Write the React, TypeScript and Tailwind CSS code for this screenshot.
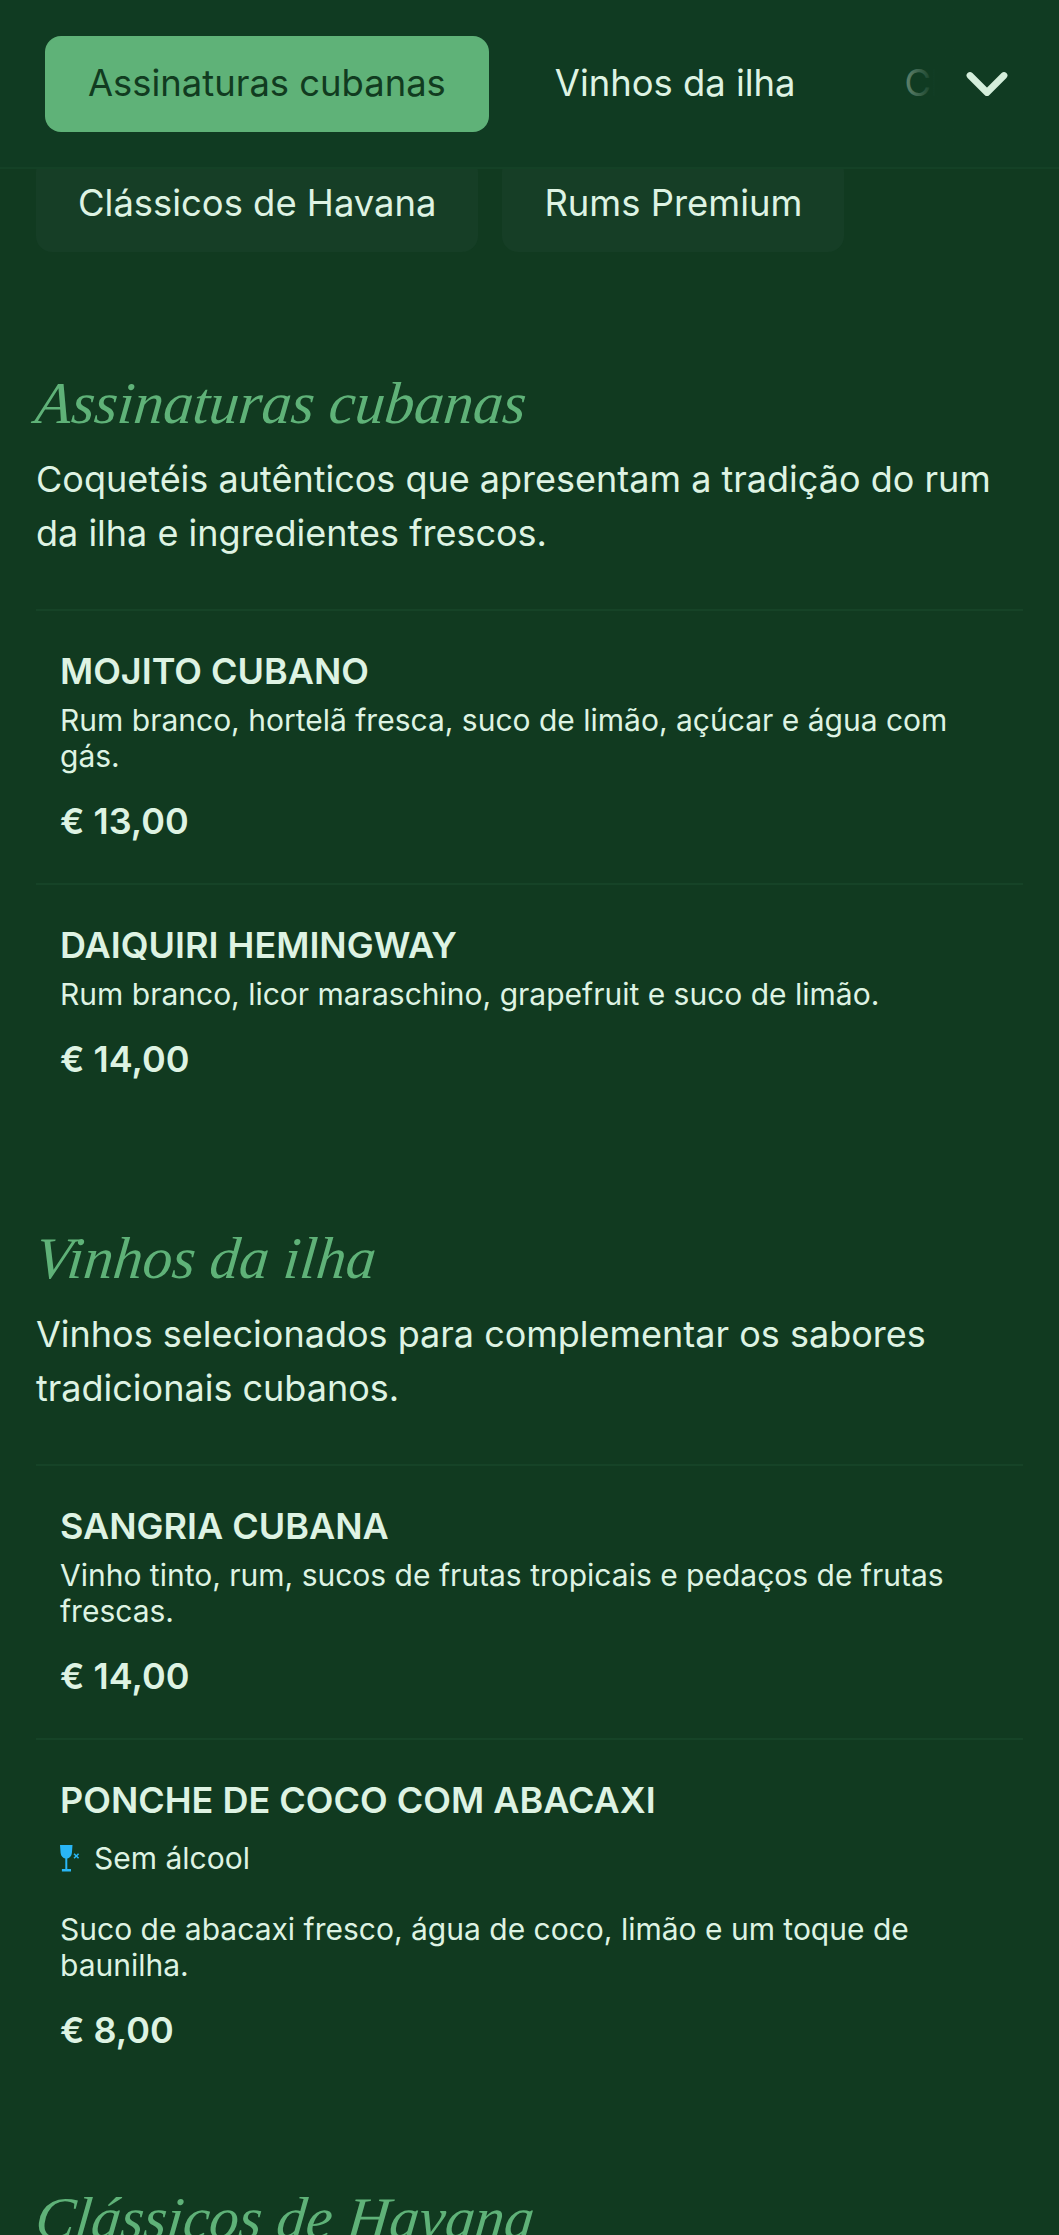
import { ChevronDown } from "lucide-react";

type Item = { name: string; desc: string[]; price: string; noAlcohol?: boolean };
type Section = { title: string; intro: string[]; items: Item[]; gap: string };

const sections: Section[] = [
  {
    title: "Assinaturas cubanas",
    intro: ["Coquetéis autênticos que apresentam a tradição do rum", "da ilha e ingredientes frescos."],
    gap: "mb-[97px]",
    items: [
      { name: "MOJITO CUBANO", desc: ["Rum branco, hortelã fresca, suco de limão, açúcar e água com", "gás."], price: "€ 13,00" },
      { name: "DAIQUIRI HEMINGWAY", desc: ["Rum branco, licor maraschino, grapefruit e suco de limão."], price: "€ 14,00" },
    ],
  },
  {
    title: "Vinhos da ilha",
    intro: ["Vinhos selecionados para complementar os sabores", "tradicionais cubanos."],
    gap: "mb-[86px]",
    items: [
      { name: "SANGRIA CUBANA", desc: ["Vinho tinto, rum, sucos de frutas tropicais e pedaços de frutas", "frescas."], price: "€ 14,00" },
      { name: "PONCHE DE COCO COM ABACAXI", desc: ["Suco de abacaxi fresco, água de coco, limão e um toque de", "baunilha."], price: "€ 8,00", noAlcohol: true },
    ],
  },
  { title: "Clássicos de Havana", intro: [], items: [], gap: "" },
];

function NoAlcoholIcon() {
  return (
    <svg viewBox="0 0 20 27" className="h-[27px] w-[20px] text-[#29b6f6]" fill="currentColor">
      <path d="M0 0h12.500l-.6 8c-.3 3.200-2.500 5.200-4.600 5.600V24h3.700v2.400H1.900V24h3.400V13.600C3.100 13.200.9 11.200.600 8z" />
      <path d="M14.600 8.200l1.700 1.700 1.700-1.700 1.100 1.100-1.700 1.700 1.700 1.700-1.100 1.100-1.700-1.700-1.700 1.700-1.100-1.100 1.700-1.700-1.700-1.700z" />
    </svg>
  );
}

function MenuItem({ item, first }: { item: Item; first: boolean }) {
  return (
    <div className={`px-[24px] ${first ? "" : "border-t-2 border-[#1b4a2d]/60"}`}>
      <h3 className="pt-[40px] text-[36px] leading-[40px] font-semibold text-[#def3e3]">{item.name}</h3>
      {item.noAlcohol && (
        <div className="mt-[18px] mb-[33px] flex h-[40px] items-center gap-[14px]">
          <NoAlcoholIcon />
          <span className="text-[30px] leading-[40px] text-[#def3e3]">Sem álcool</span>
        </div>
      )}
      <p className="mt-[11px] text-[30px] leading-[36px] text-[#def3e3]">
        {item.desc.map((line) => (
          <span key={line} className="block">{line}</span>
        ))}
      </p>
      <p className="mt-[23px] pb-[38px] text-[36px] leading-[48px] font-semibold text-[#def3e3]">{item.price}</p>
    </div>
  );
}

export default function App() {
  return (
    <div className="h-[2235px] overflow-hidden bg-[#113a20] font-['Inter',sans-serif]">
      <header className="relative z-10 flex h-[169px] items-center overflow-hidden border-b-2 border-[#1b4a2d]/40 bg-[#103b22] pl-[45px]">
        <div className="flex shrink-0 gap-[23px] text-[36.4px] leading-[94px]">
          <span className="h-[96px] rounded-[16px] bg-[#5fb278] px-[43px] text-[#113b20]">Assinaturas cubanas</span>
          <span className="h-[96px] px-[43px] text-[#def3e3]">Vinhos da ilha</span>
          <span className="h-[96px] px-[43px] text-[#def3e3]">Clássicos de Havana</span>
        </div>
        <div className="absolute top-0 right-0 flex h-full w-[200px] items-center justify-end bg-gradient-to-r from-transparent via-[#103b22] via-38% to-[#103b22] pr-[38px]">
          <ChevronDown className="h-[68px] w-[68px] text-[#d4eedb]" strokeWidth={2.4} />
        </div>
      </header>

      <nav className="-mt-[13px] flex gap-[24px] pl-[36px] text-[36.4px] leading-[94px] text-[#def3e3]">
        <span className="h-[96px] rounded-[16px] bg-[#163e26] px-[42px]">Clássicos de Havana</span>
        <span className="h-[96px] rounded-[16px] bg-[#163e26] px-[42px]">Rums Premium</span>
      </nav>

      <main className="px-[36px] pt-[111px]">
        {sections.map((section) => (
          <section key={section.title} className={section.gap}>
            <h2 className="-ml-[4px] w-fit origin-bottom-left -skew-x-6 font-['Liberation_Serif',cursive] text-[59px] leading-[80px] text-[#5fb278] italic">{section.title}</h2>
            <p className="mt-[9px] text-[36px] leading-[54px] text-[#def3e3]">
              {section.intro.map((line) => (
                <span key={line} className="block">{line}</span>
              ))}
            </p>
            {section.items.length > 0 && (
              <div className="mt-[49px] border-t-2 border-[#1b4a2d]/60">
                {section.items.map((item, i) => (
                  <MenuItem key={item.name} item={item} first={i === 0} />
                ))}
              </div>
            )}
          </section>
        ))}
      </main>
    </div>
  );
}
